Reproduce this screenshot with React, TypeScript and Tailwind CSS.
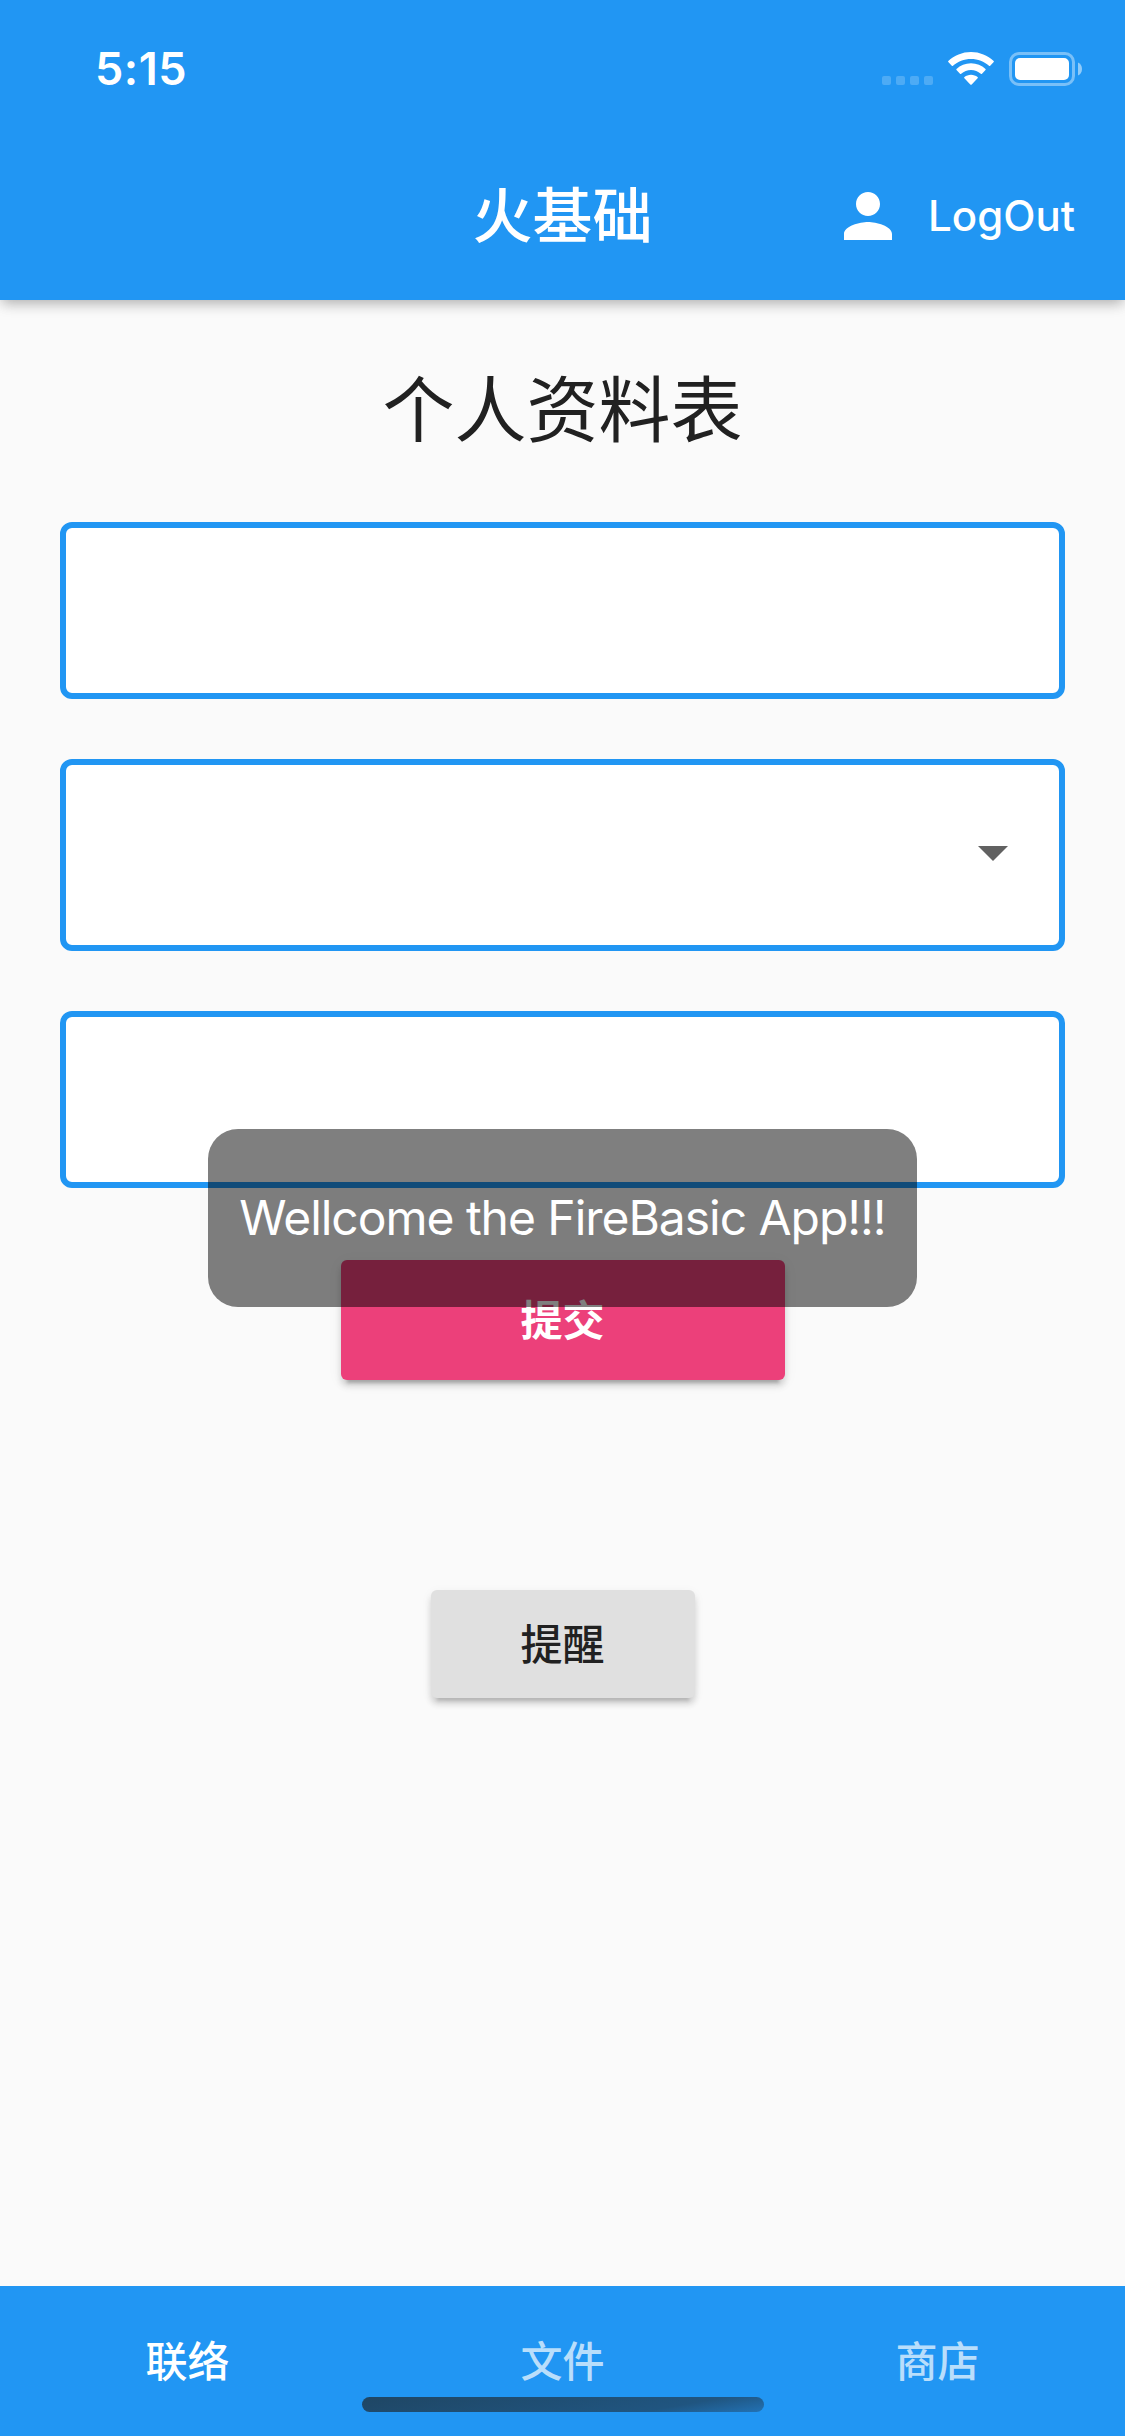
import React from "react";

const tabs = [
  { label: "联络", active: true },
  { label: "文件", active: false },
  { label: "商店", active: false },
];

function StatusBar() {
  return (
    <div className="flex h-[132px] items-start justify-between pl-[95px] pr-[43px]">
      <span className="mt-[42px] text-[45px] font-semibold leading-[54px] tracking-[0.5px]">5:15</span>
      <div className="mt-[52px] flex h-[34px] items-start">
        <div className="mt-6 flex gap-[5px]">
          {[0, 1, 2, 3].map((dot) => (
            <span key={dot} className="size-[9px] rounded-[2px] bg-white/20" />
          ))}
        </div>
        <svg className="ml-[15px] h-[33px] w-[46px]" viewBox="0 0 46 33" fill="white">
          <path d="M23 0C14.300 0 6.200 3.400 0.300 9.100Q-0.100 9.600 0.300 10.100L3.800 13.700Q4.400 14.200 5 13.700C9.800 9.300 16.100 6.900 23 6.900S36.200 9.300 41 13.700Q41.600 14.200 42.200 13.700L45.700 10.100Q46.100 9.600 45.700 9.100C39.800 3.400 31.700 0 23 0Z" />
          <path d="M23 11.300C17.400 11.300 12.300 13.400 8.500 16.900Q8 17.500 8.500 18.100L12 21.700Q12.600 22.200 13.200 21.700C15.900 19.400 19.300 18 23 18S30.100 19.400 32.800 21.700Q33.400 22.200 34 21.700L37.500 18.100Q38 17.500 37.500 16.900C33.700 13.400 28.600 11.300 23 11.300Z" />
          <path d="M23 22.800C20.500 22.800 18.200 23.700 16.500 25.100Q15.800 25.700 16.400 26.300L22.300 32.400Q23 33.100 23.700 32.400L29.600 26.300Q30.200 25.700 29.500 25.100C27.800 23.700 25.500 22.800 23 22.800Z" />
        </svg>
        <div className="ml-[15px] h-[34px] w-[66px] rounded-[10px] border-3 border-white/40 p-[3px]">
          <div className="h-full w-full rounded-[5px] bg-white" />
        </div>
        <svg className="ml-[3px] mt-[10px] h-[14px] w-1" viewBox="0 0 4 14" fill="white" fillOpacity="0.5">
          <path d="M0 0.500C2.500 1.500 4 4 4 7S2.500 12.500 0 13.500Z" />
        </svg>
      </div>
    </div>
  );
}

function Header() {
  return (
    <header className="z-10 h-[300px] shrink-0 bg-[#2196f3] text-white shadow-[0_6px_12px_-3px_rgba(0,0,0,0.2),0_3px_15px_rgba(0,0,0,0.14)]">
      <StatusBar />
      <div className="grid h-[168px] grid-cols-3 items-center">
        <span />
        <h1 className="text-center text-[60px] font-medium leading-[72px]">火基础</h1>
        <div className="flex items-center justify-end pr-[50px]">
          <svg className="mr-[24px] size-[72px]" viewBox="0 0 24 24" fill="white">
            <path d="M12 12c2.210 0 4-1.790 4-4s-1.790-4-4-4-4 1.790-4 4 1.790 4 4 4zm0 2c-2.670 0-8 1.340-8 4v2h16v-2c0-2.660-5.330-4-8-4z" />
          </svg>
          <span className="text-[42px] font-medium leading-[50px]">LogOut</span>
        </div>
      </div>
    </header>
  );
}

function Toast() {
  return (
    <div className="absolute left-[208px] top-[829px] flex h-[178px] w-[709px] items-center justify-center rounded-[30px] bg-black/50">
      <span className="whitespace-nowrap text-[48px] leading-[58px] tracking-[-1.030px] text-white">
        Wellcome the FireBasic App!!!
      </span>
    </div>
  );
}

export default function App() {
  return (
    <div className="flex h-[2436px] w-[1125px] flex-col overflow-hidden bg-[#fafafa] font-['Inter','Noto_Sans_CJK_SC',sans-serif]">
      <Header />
      <main className="relative flex flex-1 flex-col items-center px-[60px]">
        <h2 className="mt-[59px] text-[72px] font-normal leading-[102px] text-[#212121]">个人资料表</h2>
        <div className="mt-[61px] flex w-full flex-col gap-[60px]">
          <div className="h-[177px] rounded-[12px] border-6 border-[#2196f3] bg-white" />
          <div className="flex h-[192px] items-center justify-end rounded-[12px] border-6 border-[#2196f3] bg-white pr-[51px]">
            <svg className="mb-[4px] h-[15px] w-[30px]" viewBox="0 0 30 15" fill="#616161">
              <path d="M0 0h30L15 15z" />
            </svg>
          </div>
          <div className="h-[177px] rounded-[12px] border-6 border-[#2196f3] bg-white" />
        </div>
        <button className="mt-[72px] h-[120px] w-[444px] rounded-[6px] bg-[#ec407a] text-[42px] font-bold text-white shadow-[0_9px_3px_-6px_rgba(0,0,0,0.2),0_6px_6px_rgba(0,0,0,0.14),0_3px_15px_rgba(0,0,0,0.06)]">
          提交
        </button>
        <button className="mt-[210px] h-[108px] w-[264px] rounded-[6px] bg-[#e0e0e0] text-[42px] font-medium text-[#212121] shadow-[0_9px_3px_-6px_rgba(0,0,0,0.12),0_6px_6px_rgba(0,0,0,0.14),0_3px_12px_rgba(0,0,0,0.06)]">
          提醒
        </button>
        <Toast />
      </main>
      <nav className="relative grid h-[150px] shrink-0 grid-cols-3 items-center bg-[#2196f3] text-center text-[42px] font-medium text-white">
        {tabs.map((tab) => (
          <span key={tab.label} className={tab.active ? "text-white" : "text-white/70"}>
            {tab.label}
          </span>
        ))}
        <div className="absolute bottom-6 left-1/2 h-[15px] w-[402px] -translate-x-1/2 rounded-full bg-[linear-gradient(170deg,#1f4664_0%,#205580_75%,#2272b5_100%)]" />
      </nav>
    </div>
  );
}
